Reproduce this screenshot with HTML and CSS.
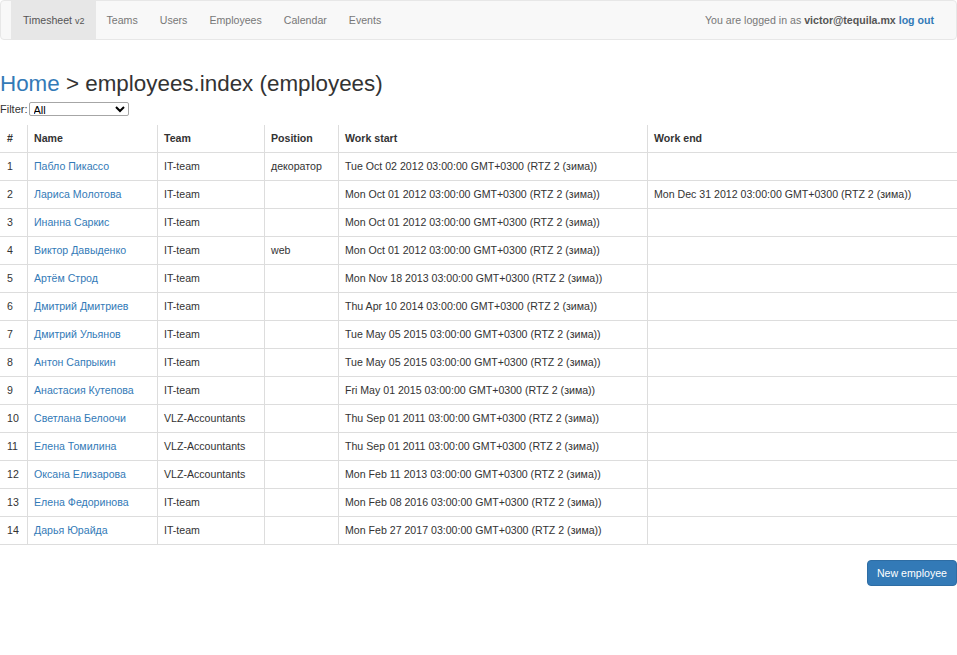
FILE: index.html
```html
<!DOCTYPE html>
<html>
<head>
<meta charset="utf-8">
<link rel="stylesheet" href="styles.css">
</head>
<body>
<nav class="navbar">
  <ul class="nav">
    <li class="active"><a href="#">Timesheet <small>v2</small></a></li>
    <li><a href="#">Teams</a></li>
    <li><a href="#">Users</a></li>
    <li><a href="#">Employees</a></li>
    <li><a href="#">Calendar</a></li>
    <li><a href="#">Events</a></li>
  </ul>
  <div class="login">You are logged in as <b>victor@tequila.mx</b> <a href="#">log out</a></div>
</nav>
<h2 class="title"><a href="#">Home</a> &gt; employees.index (employees)</h2>
<div class="filter"><span>Filter:</span><select class="sel"><option>All</option></select></div>
<table class="grid">
  <colgroup>
    <col class="c1"><col class="c2"><col class="c3"><col class="c4"><col class="c5"><col class="c6">
  </colgroup>
  <thead>
    <tr><th>#</th><th>Name</th><th>Team</th><th>Position</th><th>Work start</th><th>Work end</th></tr>
  </thead>
  <tbody>
    <tr><td>1</td><td><a href="#">Пабло Пикассо</a></td><td>IT-team</td><td>декоратор</td><td>Tue Oct 02 2012 03:00:00 GMT+0300 (RTZ 2 (зима))</td><td></td></tr>
    <tr><td>2</td><td><a href="#">Лариса Молотова</a></td><td>IT-team</td><td></td><td>Mon Oct 01 2012 03:00:00 GMT+0300 (RTZ 2 (зима))</td><td>Mon Dec 31 2012 03:00:00 GMT+0300 (RTZ 2 (зима))</td></tr>
    <tr><td>3</td><td><a href="#">Инанна Саркис</a></td><td>IT-team</td><td></td><td>Mon Oct 01 2012 03:00:00 GMT+0300 (RTZ 2 (зима))</td><td></td></tr>
    <tr><td>4</td><td><a href="#">Виктор Давыденко</a></td><td>IT-team</td><td>web</td><td>Mon Oct 01 2012 03:00:00 GMT+0300 (RTZ 2 (зима))</td><td></td></tr>
    <tr><td>5</td><td><a href="#">Артём Строд</a></td><td>IT-team</td><td></td><td>Mon Nov 18 2013 03:00:00 GMT+0300 (RTZ 2 (зима))</td><td></td></tr>
    <tr><td>6</td><td><a href="#">Дмитрий Дмитриев</a></td><td>IT-team</td><td></td><td>Thu Apr 10 2014 03:00:00 GMT+0300 (RTZ 2 (зима))</td><td></td></tr>
    <tr><td>7</td><td><a href="#">Дмитрий Ульянов</a></td><td>IT-team</td><td></td><td>Tue May 05 2015 03:00:00 GMT+0300 (RTZ 2 (зима))</td><td></td></tr>
    <tr><td>8</td><td><a href="#">Антон Сапрыкин</a></td><td>IT-team</td><td></td><td>Tue May 05 2015 03:00:00 GMT+0300 (RTZ 2 (зима))</td><td></td></tr>
    <tr><td>9</td><td><a href="#">Анастасия Кутепова</a></td><td>IT-team</td><td></td><td>Fri May 01 2015 03:00:00 GMT+0300 (RTZ 2 (зима))</td><td></td></tr>
    <tr><td>10</td><td><a href="#">Светлана Белоочи</a></td><td>VLZ-Accountants</td><td></td><td>Thu Sep 01 2011 03:00:00 GMT+0300 (RTZ 2 (зима))</td><td></td></tr>
    <tr><td>11</td><td><a href="#">Елена Томилина</a></td><td>VLZ-Accountants</td><td></td><td>Thu Sep 01 2011 03:00:00 GMT+0300 (RTZ 2 (зима))</td><td></td></tr>
    <tr><td>12</td><td><a href="#">Оксана Елизарова</a></td><td>VLZ-Accountants</td><td></td><td>Mon Feb 11 2013 03:00:00 GMT+0300 (RTZ 2 (зима))</td><td></td></tr>
    <tr><td>13</td><td><a href="#">Елена Федоринова</a></td><td>IT-team</td><td></td><td>Mon Feb 08 2016 03:00:00 GMT+0300 (RTZ 2 (зима))</td><td></td></tr>
    <tr><td>14</td><td><a href="#">Дарья Юрайда</a></td><td>IT-team</td><td></td><td>Mon Feb 27 2017 03:00:00 GMT+0300 (RTZ 2 (зима))</td><td></td></tr>
  </tbody>
</table>
<div class="actions"><button class="btn">New employee</button></div>
</body>
</html>
```
FILE: styles.css
```css
html, body {
  margin: 0;
  padding: 0;
  font-family: "Liberation Sans", Arial, sans-serif;
  font-size: 10.6px;
  color: #333;
  background: #fff;
}
a { color: #337ab7; text-decoration: none; }

.navbar {
  display: flex;
  justify-content: space-between;
  align-items: stretch;
  height: 40px;
  box-sizing: border-box;
  background: #f8f8f8;
  border: 1px solid #e7e7e7;
  border-radius: 4px;
  padding-left: 10px;
}
.nav {
  display: flex;
  list-style: none;
  margin: 0;
  padding: 0;
}
.nav li a {
  display: block;
  padding: 0 11px;
  line-height: 38px;
  color: #777;
}
.nav li.active a {
  background: #e7e7e7;
  color: #555;
  padding-left: 12px;
}
.nav small { font-size: 9px; }
.login {
  line-height: 38px;
  color: #777;
  padding-right: 22px;
}
.login b { color: #555; }
.login a { font-weight: bold; color: #337ab7; }

.title {
  margin: 30px 0 4px 0;
  font-size: 22.4px;
  font-weight: normal;
  line-height: 28px;
  color: #333;
}
.filter {
  font-size: 11px;
  display: flex;
  align-items: center;
  gap: 1px;
  height: 14px;
}
.sel {
  width: 100px;
  height: 14px;
  font-family: "Liberation Sans", Arial, sans-serif;
  font-size: 11px;
  padding: 0;
  border: 1px solid #a6a6a6;
  background: #fff;
  border-radius: 2px;
}
.grid {
  margin-top: 9px;
  width: 958px;
  margin-left: -1px;
  border-collapse: collapse;
  table-layout: fixed;
}
.c1 { width: 28px; }
.c2 { width: 130px; }
.c3 { width: 107px; }
.c4 { width: 74px; }
.c5 { width: 309px; }
.c6 { width: 310px; }
.grid th, .grid td {
  border: 1px solid #ddd;
  padding: 5px 6px;
  line-height: 17px;
  text-align: left;
  white-space: nowrap;
  overflow: hidden;
}
.grid th { font-weight: bold; border-top: none; }
.grid td { height: 17px; }
.grid th:first-child, .grid td:first-child { padding-left: 7px; }

.actions {
  display: flex;
  justify-content: flex-end;
  margin-top: 15px;
}
.btn {
  background: #337ab7;
  border: 1px solid #2e6da4;
  color: #fff;
  border-radius: 4px;
  font-family: "Liberation Sans", Arial, sans-serif;
  font-size: 10.6px;
  height: 26px;
  padding: 0 9px;
}
```
